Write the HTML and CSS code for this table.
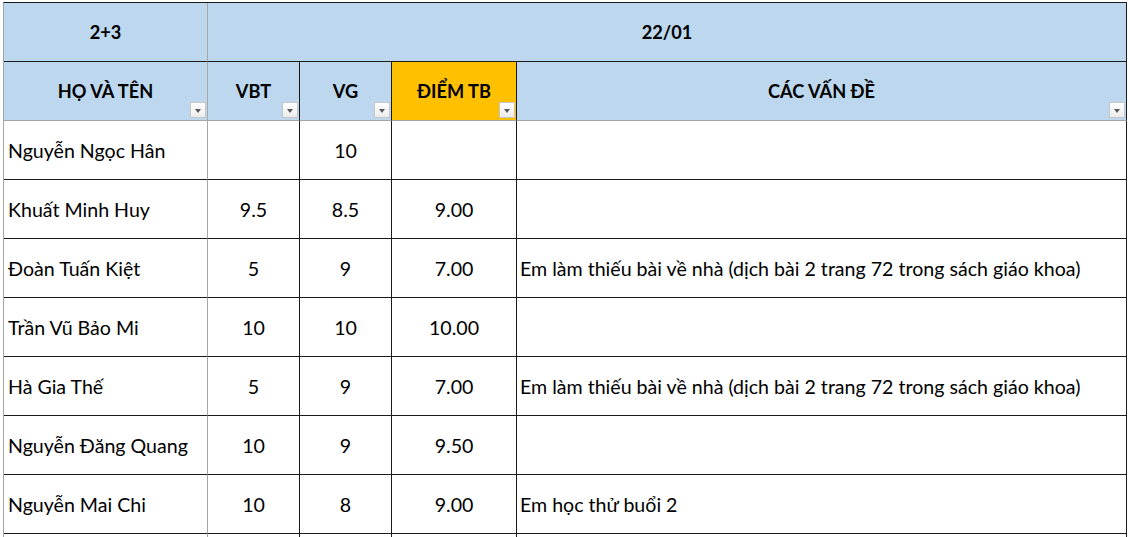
FILE: index.html
```html
<!DOCTYPE html>
<html lang="vi">
<head>
<meta charset="utf-8">
<title>Bảng điểm</title>
<link rel="stylesheet" href="styles.css">
</head>
<body>
<div class="sheet">
  <div class="cell hd hd-top c1">2+3</div>
  <div class="cell hd hd-top span4">22/01</div>

  <div class="cell hd c1 filt">HỌ VÀ TÊN<span class="dd"></span></div>
  <div class="cell hd filt">VBT<span class="dd"></span></div>
  <div class="cell hd filt">VG<span class="dd"></span></div>
  <div class="cell hd orange filt">ĐIỂM TB<span class="dd"></span></div>
  <div class="cell hd filt">CÁC VẤN ĐỀ<span class="dd"></span></div>

  <div class="cell name c1">Nguyễn Ngọc Hân</div>
  <div class="cell num"></div>
  <div class="cell num">10</div>
  <div class="cell num"></div>
  <div class="cell note"></div>

  <div class="cell name c1">Khuất Minh Huy</div>
  <div class="cell num">9.5</div>
  <div class="cell num">8.5</div>
  <div class="cell num">9.00</div>
  <div class="cell note"></div>

  <div class="cell name c1">Đoàn Tuấn Kiệt</div>
  <div class="cell num">5</div>
  <div class="cell num">9</div>
  <div class="cell num">7.00</div>
  <div class="cell note">Em làm thiếu bài về nhà (dịch bài 2 trang 72 trong sách giáo khoa)</div>

  <div class="cell name c1">Trần Vũ Bảo Mi</div>
  <div class="cell num">10</div>
  <div class="cell num">10</div>
  <div class="cell num">10.00</div>
  <div class="cell note"></div>

  <div class="cell name c1">Hà Gia Thế</div>
  <div class="cell num">5</div>
  <div class="cell num">9</div>
  <div class="cell num">7.00</div>
  <div class="cell note">Em làm thiếu bài về nhà (dịch bài 2 trang 72 trong sách giáo khoa)</div>

  <div class="cell name c1">Nguyễn Đăng Quang</div>
  <div class="cell num">10</div>
  <div class="cell num">9</div>
  <div class="cell num">9.50</div>
  <div class="cell note"></div>

  <div class="cell name c1">Nguyễn Mai Chi</div>
  <div class="cell num">10</div>
  <div class="cell num">8</div>
  <div class="cell num">9.00</div>
  <div class="cell note">Em học thử buổi 2</div>

  <div class="cell c1 tail"></div>
  <div class="cell tail"></div>
  <div class="cell tail"></div>
  <div class="cell tail"></div>
  <div class="cell tail"></div>
</div>
</body>
</html>
```

FILE: styles.css
```css
html, body {
  margin: 0;
  padding: 0;
  background: #ffffff;
  overflow: hidden;
}
body {
  width: 1130px;
  height: 537px;
  padding: 2px 0 0 3px;
  box-sizing: border-box;
  font-family: "Lato", "Open Sans", sans-serif;
  color: #000000;
}
.sheet {
  display: grid;
  grid-template-columns: 204px 92px 92px 125px 610px;
  grid-template-rows: repeat(9, 59px) 20px;
  border-top: 1px solid #1a1a1a;
  border-left: 1px solid #a6a6a6;
  width: max-content;
}
.cell {
  position: relative;
  box-sizing: border-box;
  border-right: 1px solid #1a1a1a;
  border-bottom: 1px solid #1a1a1a;
  display: flex;
  align-items: center;
  font-size: 19.6px;
  white-space: nowrap;
}
.c1 {
  border-right-color: #a6a6a6;
}
.span4 {
  grid-column: 2 / span 4;
}
.hd {
  background: #bdd7ee;
  font-weight: bold;
  justify-content: center;
  font-size: 18.2px;
}
.hd.filt {
  border-bottom-color: #a6a6a6;
}
.orange {
  background: #ffc000;
}
.name {
  padding-left: 4px;
}
.num {
  justify-content: center;
}
.note {
  padding-left: 3px;
}
.tail {
  border-bottom: none;
}
.dd {
  position: absolute;
  right: 1px;
  bottom: 2px;
  width: 16px;
  height: 16px;
  box-sizing: border-box;
  border: 1px solid #c6c6c6;
  background: linear-gradient(#ffffff, #ececec);
}
.dd::after {
  content: "";
  position: absolute;
  left: 4px;
  top: 6px;
  border-left: 3.5px solid transparent;
  border-right: 3.5px solid transparent;
  border-top: 4px solid #5a5a5a;
}
```
